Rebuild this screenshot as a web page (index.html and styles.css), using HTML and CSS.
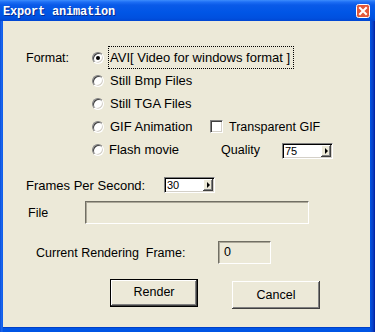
FILE: index.html
```html
<!DOCTYPE html>
<html lang="en">
<head>
    <meta charset="UTF-8">
    <title>Export animation</title>
    <link rel="stylesheet" href="styles.css">
</head>
<body>
    <div class="window">
        <div class="titlebar">
            <span class="title">Export animation</span>
            <svg class="close" width="14" height="14" viewBox="0 0 14 14">
                <rect x="0.5" y="0.5" width="13" height="13" rx="2" fill="#e2583a" stroke="#fff"/>
                <path d="M4 4 L10 10 M10 4 L4 10" stroke="#fff" stroke-width="2" stroke-linecap="square"/>
            </svg>
        </div>
        <div class="client">
            <div class="format">
                <span class="lbl">Format:</span>
                <label class="opt wide"><span class="radio checked"></span><span class="focus">AVI[ Video for windows format ]</span></label>

                <span></span>
                <label class="opt"><span class="radio"></span><span class="txt">Still Bmp Files</span></label>
                <span></span>

                <span></span>
                <label class="opt"><span class="radio"></span><span class="txt">Still TGA Files</span></label>
                <span></span>

                <span></span>
                <label class="opt"><span class="radio"></span><span class="txt">GIF Animation</span></label>
                <label class="extra"><span class="check"></span><span class="txt small">Transparent GIF</span></label>

                <span></span>
                <label class="opt"><span class="radio"></span><span class="txt flash">Flash movie</span></label>
                <div class="extra quality">
                    <span class="qlbl">Quality</span>
                    <div class="combo"><span>75</span><span class="spin"><i></i></span></div>
                </div>
            </div>

            <div class="row fps">
                <span class="fps-lbl">Frames Per Second:</span>
                <div class="combo"><span>30</span><span class="spin"><i></i></span></div>
            </div>

            <div class="row file">
                <span class="file-lbl">File</span>
                <div class="field file-box"></div>
            </div>

            <div class="row current">
                <span class="cur-lbl">Current Rendering&nbsp; Frame:</span>
                <div class="field frame-box">0</div>
            </div>

            <div class="buttons">
                <button class="btn default">Render</button>
                <button class="btn cancel">Cancel</button>
            </div>
        </div>
    </div>
</body>
</html>
```

FILE: styles.css
```css
html, body {
    margin: 0;
    padding: 0;
}
body {
    width: 375px;
    height: 332px;
    overflow: hidden;
    font-family: "Liberation Sans", Arial, sans-serif;
    font-size: 12.5px;
    color: #000;
}
.window {
    width: 375px;
    height: 332px;
    box-sizing: border-box;
    background: linear-gradient(90deg, #0a4fd8 0, #1f6af2 2px, #0055e5 3px, #0055e5 370px, #0a3fc4 373px, #001ea0 375px);
    padding: 0 5px 4px 3px;
    display: flex;
    flex-direction: column;
}
.titlebar {
    height: 21px;
    margin: 0 -5px 0 -3px;
    padding: 0 5px 0 3px;
    display: flex;
    align-items: center;
    justify-content: space-between;
    background: linear-gradient(#3d8dfc 0, #1e6ff5 2px, #0a5ae8 5px, #0056e6 12px, #0050df 18px, #0046d2 21px);
}
.title {
    font-family: "Liberation Mono", "DejaVu Sans Mono", monospace;
    font-weight: bold;
    font-size: 12px;
    color: #fff;
    text-shadow: 1px 1px #0a2b8c;
    padding-top: 2px;
    letter-spacing: -0.2px;
}
.close {
    display: block;
    margin-top: 1px;
}
.client {
    flex: 1;
    background: #ece9d8;
    border-bottom: 1px solid #0040c8;
}
.format {
    display: grid;
    grid-template-columns: 66px 118px auto;
    grid-auto-rows: 23px;
    margin: 25px 0 0 23px;
    align-items: center;
}
.opt, .extra {
    display: flex;
    align-items: center;
}
.opt {
    font-size: 13px;
}
.small {
    font-size: 12.5px;
}
.wide {
    grid-column: 2 / 4;
}
.radio {
    width: 12px;
    height: 12px;
    box-sizing: border-box;
    border-radius: 50%;
    border: 1px solid;
    border-color: #808080 #ffffff #ffffff #808080;
    box-shadow: inset 1px 1px #404040, inset -1px -1px #d4d0c8;
    background: #fff;
    display: flex;
    align-items: center;
    justify-content: center;
    margin-right: 6px;
}
.radio.checked::after {
    content: "";
    width: 4px;
    height: 4px;
    border-radius: 50%;
    background: #000;
}
.focus {
    outline: 1px dotted #000;
    padding: 3px 3px 3px 1px;
    margin-left: -1px;
}
.flash {
    margin-left: -1px;
}
.check {
    width: 13px;
    height: 13px;
    box-sizing: border-box;
    border: 1px solid;
    border-color: #808080 #ffffff #ffffff #808080;
    box-shadow: inset 1px 1px #404040, inset -1px -1px #d4d0c8;
    background: #fff;
    margin-right: 6px;
}
.quality {
    padding-left: 11px;
}
.qlbl {
    width: 61px;
}
.combo {
    width: 51px;
    height: 16px;
    box-sizing: border-box;
    border: 1px solid;
    border-color: #808080 #ffffff #ffffff #808080;
    box-shadow: inset 1px 1px #000, inset -1px -1px #d4d0c8;
    background: #fff;
    display: flex;
    align-items: center;
    justify-content: space-between;
    padding: 0 1px 0 2px;
    font-size: 11px;
    line-height: 12px;
}
.quality .combo {
    margin-top: 3px;
}
.spin {
    width: 10px;
    height: 12px;
    box-sizing: border-box;
    background: #ece9d8;
    box-shadow: inset -1px -1px #404040, inset 1px 1px #fff, inset -2px -2px #808080;
    display: flex;
    align-items: center;
    justify-content: center;
}
.spin i {
    width: 0;
    height: 0;
    border-left: 3px solid #000;
    border-top: 3px solid transparent;
    border-bottom: 3px solid transparent;
    margin-left: 1px;
}
.row {
    display: flex;
    align-items: center;
}
.fps {
    margin-top: 16px;
    padding-left: 23px;
    height: 16px;
}
.fps-lbl {
    width: 138px;
    font-size: 13px;
}
.file {
    margin-top: 8px;
    padding-left: 25px;
    height: 23px;
}
.file-lbl {
    width: 57px;
}
.field {
    height: 23px;
    box-sizing: border-box;
    border: 1px solid;
    border-color: #716f64 #ffffff #ffffff #716f64;
    box-shadow: inset 1px 1px #aca899;
    background: #ece9d8;
}
.file-box {
    width: 224px;
}
.current {
    margin-top: 17px;
    padding-left: 33px;
    height: 23px;
}
.cur-lbl {
    width: 182px;
}
.frame-box {
    width: 53px;
    padding: 3px 0 0 5px;
}
.buttons {
    display: flex;
    align-items: flex-start;
    gap: 34px;
    margin-top: 15px;
    padding-left: 107px;
}
.btn {
    width: 88px;
    height: 28px;
    box-sizing: border-box;
    background: #ece9d8;
    font-family: "Liberation Sans", Arial, sans-serif;
    font-size: 12.5px;
    color: #000;
    border: none;
    padding: 0;
    box-shadow: inset -1px -1px #404040, inset 1px 1px #fff, inset -2px -2px #808080;
}
.btn.default {
    border: 1px solid #000;
    padding-bottom: 3px;
}
.btn.cancel {
    margin-top: 2px;
}
```
